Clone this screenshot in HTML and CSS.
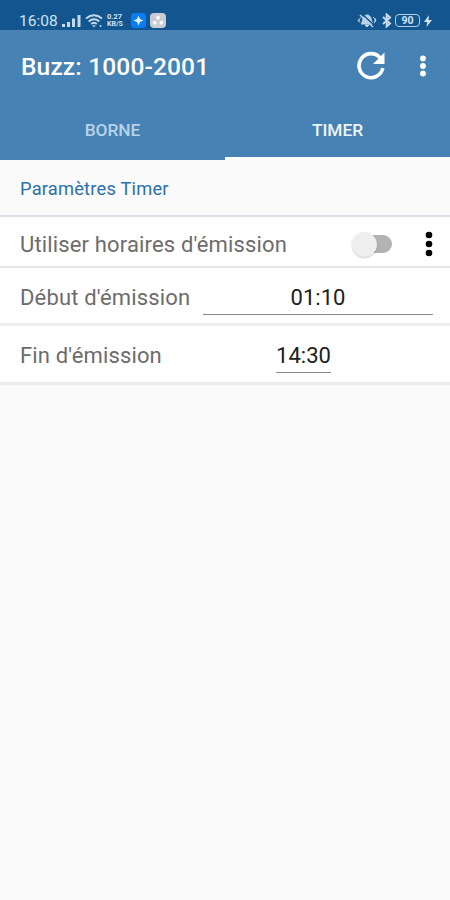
FILE: index.html
```html
<!DOCTYPE html>
<html lang="fr">
<head>
<meta charset="utf-8">
<title>Buzz: 1000-2001</title>
<link rel="stylesheet" href="styles.css">
</head>
<body>
<header class="status">
  <span class="clock">16:08</span>
  <svg class="signal" width="20" height="14" viewBox="0 0 20 14" fill="#c5daee"><rect x="0" y="10" width="3" height="3"/><rect x="5" y="8" width="3" height="5"/><rect x="10" y="4.500" width="3" height="8.500"/><rect x="15.500" y="1" width="3" height="12"/></svg>
  <svg class="wifi" width="19" height="14" viewBox="0 0 19 14" fill="none" stroke="#c5daee" stroke-width="1.800"><path d="M1 4.500Q9 -2 17 4.500M3.700 7.500Q9 3 14.300 7.500M6.200 10Q9 7.500 11.800 10"/><path d="M7.200 11.200h3.600L9 13.200z" fill="#c5daee" stroke="none"/><circle cx="15.500" cy="12" r="1" fill="#c5daee" stroke="none"/></svg>
  <span class="speed"><span class="rate">0.27</span><span class="unit">KB/S</span></span>
  <svg class="app" width="15" height="15" viewBox="0 0 15 15"><rect width="15" height="15" rx="3.500" fill="#087df5"/><path d="M7.500 2.500l1.500 3.500 3.500 1.500-3.500 1.500-1.500 3.500-1.500-3.500-3.500-1.500 3.500-1.500z" fill="#e1f2ff"/></svg>
  <svg class="app" width="16" height="15" viewBox="0 0 16 15"><rect width="16" height="15" rx="4" fill="#c7cdd2"/><g fill="#f5f7f9"><circle cx="8" cy="4.700" r="2"/><circle cx="4.700" cy="9.800" r="2"/><circle cx="11.300" cy="9.800" r="2"/></g></svg>
  <span class="spring"></span>
  <svg class="mute" width="20" height="15" viewBox="0 0 20 15"><path d="M4 11c2-1 1-9 6-9s4 7 6 9zM8 12h4l-2 2z" fill="#bdd4e8" stroke="#bdd4e8"/><path d="M2 6v3M18 5v4M4 4.500l-3 3 2 2M16 4l3 3-2 3" fill="none" stroke="#bdd4e8"/><path d="M5 1l12 11" stroke="#13568f" stroke-width="1.500"/><path d="M3 2l13 12" stroke="#bdd4e8" stroke-width="1.500"/></svg>
  <svg class="bluetooth" width="10" height="15" viewBox="0 0 10 15" fill="none" stroke="#c5daee" stroke-width="2"><path d="M1 4l7 6.500-3.300 3V1.500L8 4.500 1 11"/></svg>
  <span class="battery">90</span>
  <svg class="bolt" width="8" height="12" viewBox="0 0 8 12"><path d="M5 0L0 7h3.200L2.500 12 8 5H4.500z" fill="#d0e2f2"/></svg>
</header>
<div class="toolbar">
  <h1>Buzz: 1000-2001</h1>
  <svg class="refresh" width="30" height="30" viewBox="0 0 30 30"><path d="M24.500 7.300A12 12 0 1 0 26.800 17" fill="none" stroke="#fff" stroke-width="3.600"/><path d="M28.500 1.500V13H17z" fill="#fff"/></svg>
  <svg class="more" width="8" height="22" viewBox="0 0 8 22" fill="#fff"><circle cx="4" cy="3.500" r="2.900"/><circle cx="4" cy="11" r="2.900"/><circle cx="4" cy="18.500" r="2.900"/></svg>
</div>
<nav class="tabs">
  <div class="tab"><span class="borne">BORNE</span></div>
  <div class="tab active"><span class="timer">TIMER</span></div>
</nav>
<main>
  <h2><span>Paramètres Timer</span></h2>
  <div class="row enable">
    <span class="label">Utiliser horaires d'émission</span>
    <span class="switch"><span class="thumb"></span></span>
    <svg class="menu" width="8" height="28" viewBox="0 0 8 28"><circle cx="4" cy="5" r="3.300"/><circle cx="4" cy="14" r="3.300"/><circle cx="4" cy="23" r="3.300"/></svg>
  </div>
  <div class="row start">
    <span class="label">Début d'émission</span>
    <span class="time wide">01:10</span>
  </div>
  <div class="row end">
    <span class="label">Fin d'émission</span>
    <span class="time short">14:30</span>
  </div>
</main>
</body>
</html>
```
FILE: styles.css
```css
* { box-sizing: border-box; }
body { margin: 0; height: 900px; background: #fafafa; font-family: Roboto, sans-serif; overflow: hidden; }
svg { display: block; flex: none; }
.status { height: 30px; background: #13568f; color: #d0e2f2; display: flex; align-items: center; padding: 11px 18px 0 19px; }
.clock { width: 43px; font-size: 15.5px; line-height: 18px; white-space: nowrap; }
.wifi { margin-left: 3px; }
.speed { display: flex; flex-direction: column; width: 19px; margin: -1px 5px 0 3px; font-size: 7.5px; line-height: 9px; font-weight: 700; }
.unit { margin-top: -1px; font-size: 7px; line-height: 8px; }
.app + .app { margin-left: 4px; }
.app { margin-top: -1px; }
.spring { flex: 1; }
.bluetooth { margin: 0 3px 0 5px; }
.battery { width: 25px; height: 13px; border: 1.5px solid #b5cee4; border-radius: 4px; font-size: 10.5px; line-height: 11px; font-weight: 700; text-align: center; }
.bolt { margin-left: 4px; }
.toolbar { height: 73px; background: #4682b4; display: flex; align-items: center; padding: 0 23px 2px 21px; color: #fff; }
h1 { margin: 2px 0 0; flex: 1; font-size: 24.5px; line-height: 30px; font-weight: 500; letter-spacing: .15px; white-space: nowrap; }
.more { margin-left: 33px; }
.tabs { height: 57px; display: flex; background: #4682b4; font-size: 17.3px; font-weight: 500; line-height: 22px; }
.tab { flex: 1; display: flex; justify-content: center; padding-top: 16px; color: #b8d2e8; }
.tab.active { color: #edf5fc; border-bottom: 3px solid #fff; }
h2 { margin: 0; height: 57px; display: flex; align-items: center; padding: 2px 20px 0; border-bottom: 2px solid #dadfea; font-size: 18.3px; font-weight: 400; line-height: 22px; letter-spacing: .2px; color: #2d70ab; }
.row { display: flex; background: #fff; padding-left: 20px; color: #6c6c6c; font-size: 22px; line-height: 28px; white-space: nowrap; }
.enable { height: 51px; align-items: center; padding-top: 5px; border-bottom: 2px solid #e7e7e7; }
.label { flex: none; letter-spacing: .15px; }
.enable .label { width: 337px; padding-top: 2px; }
.switch { display: block; position: relative; width: 35px; height: 18px; border-radius: 9px; background: #b3b3b3; }
.thumb { position: absolute; left: -5px; top: -3px; width: 25px; height: 25px; border-radius: 50%; background: #efefef; box-shadow: 0 1px 2px #0003; }
.menu { margin-left: 33px; }
.start { height: 58px; padding-top: 15px; border-bottom: 3px solid #ededed; }
.start .label { width: 183px; padding-top: 1px; }
.end { height: 59px; padding-top: 15px; border-bottom: 3px solid #ededed; }
.end .label { width: 256px; padding-top: 1px; }
.time { color: #202020; border-bottom: 1.5px solid #888; height: 32px; padding-top: 1px; text-align: center; }
.wide { width: 230px; }
.short { width: 55px; }
```
